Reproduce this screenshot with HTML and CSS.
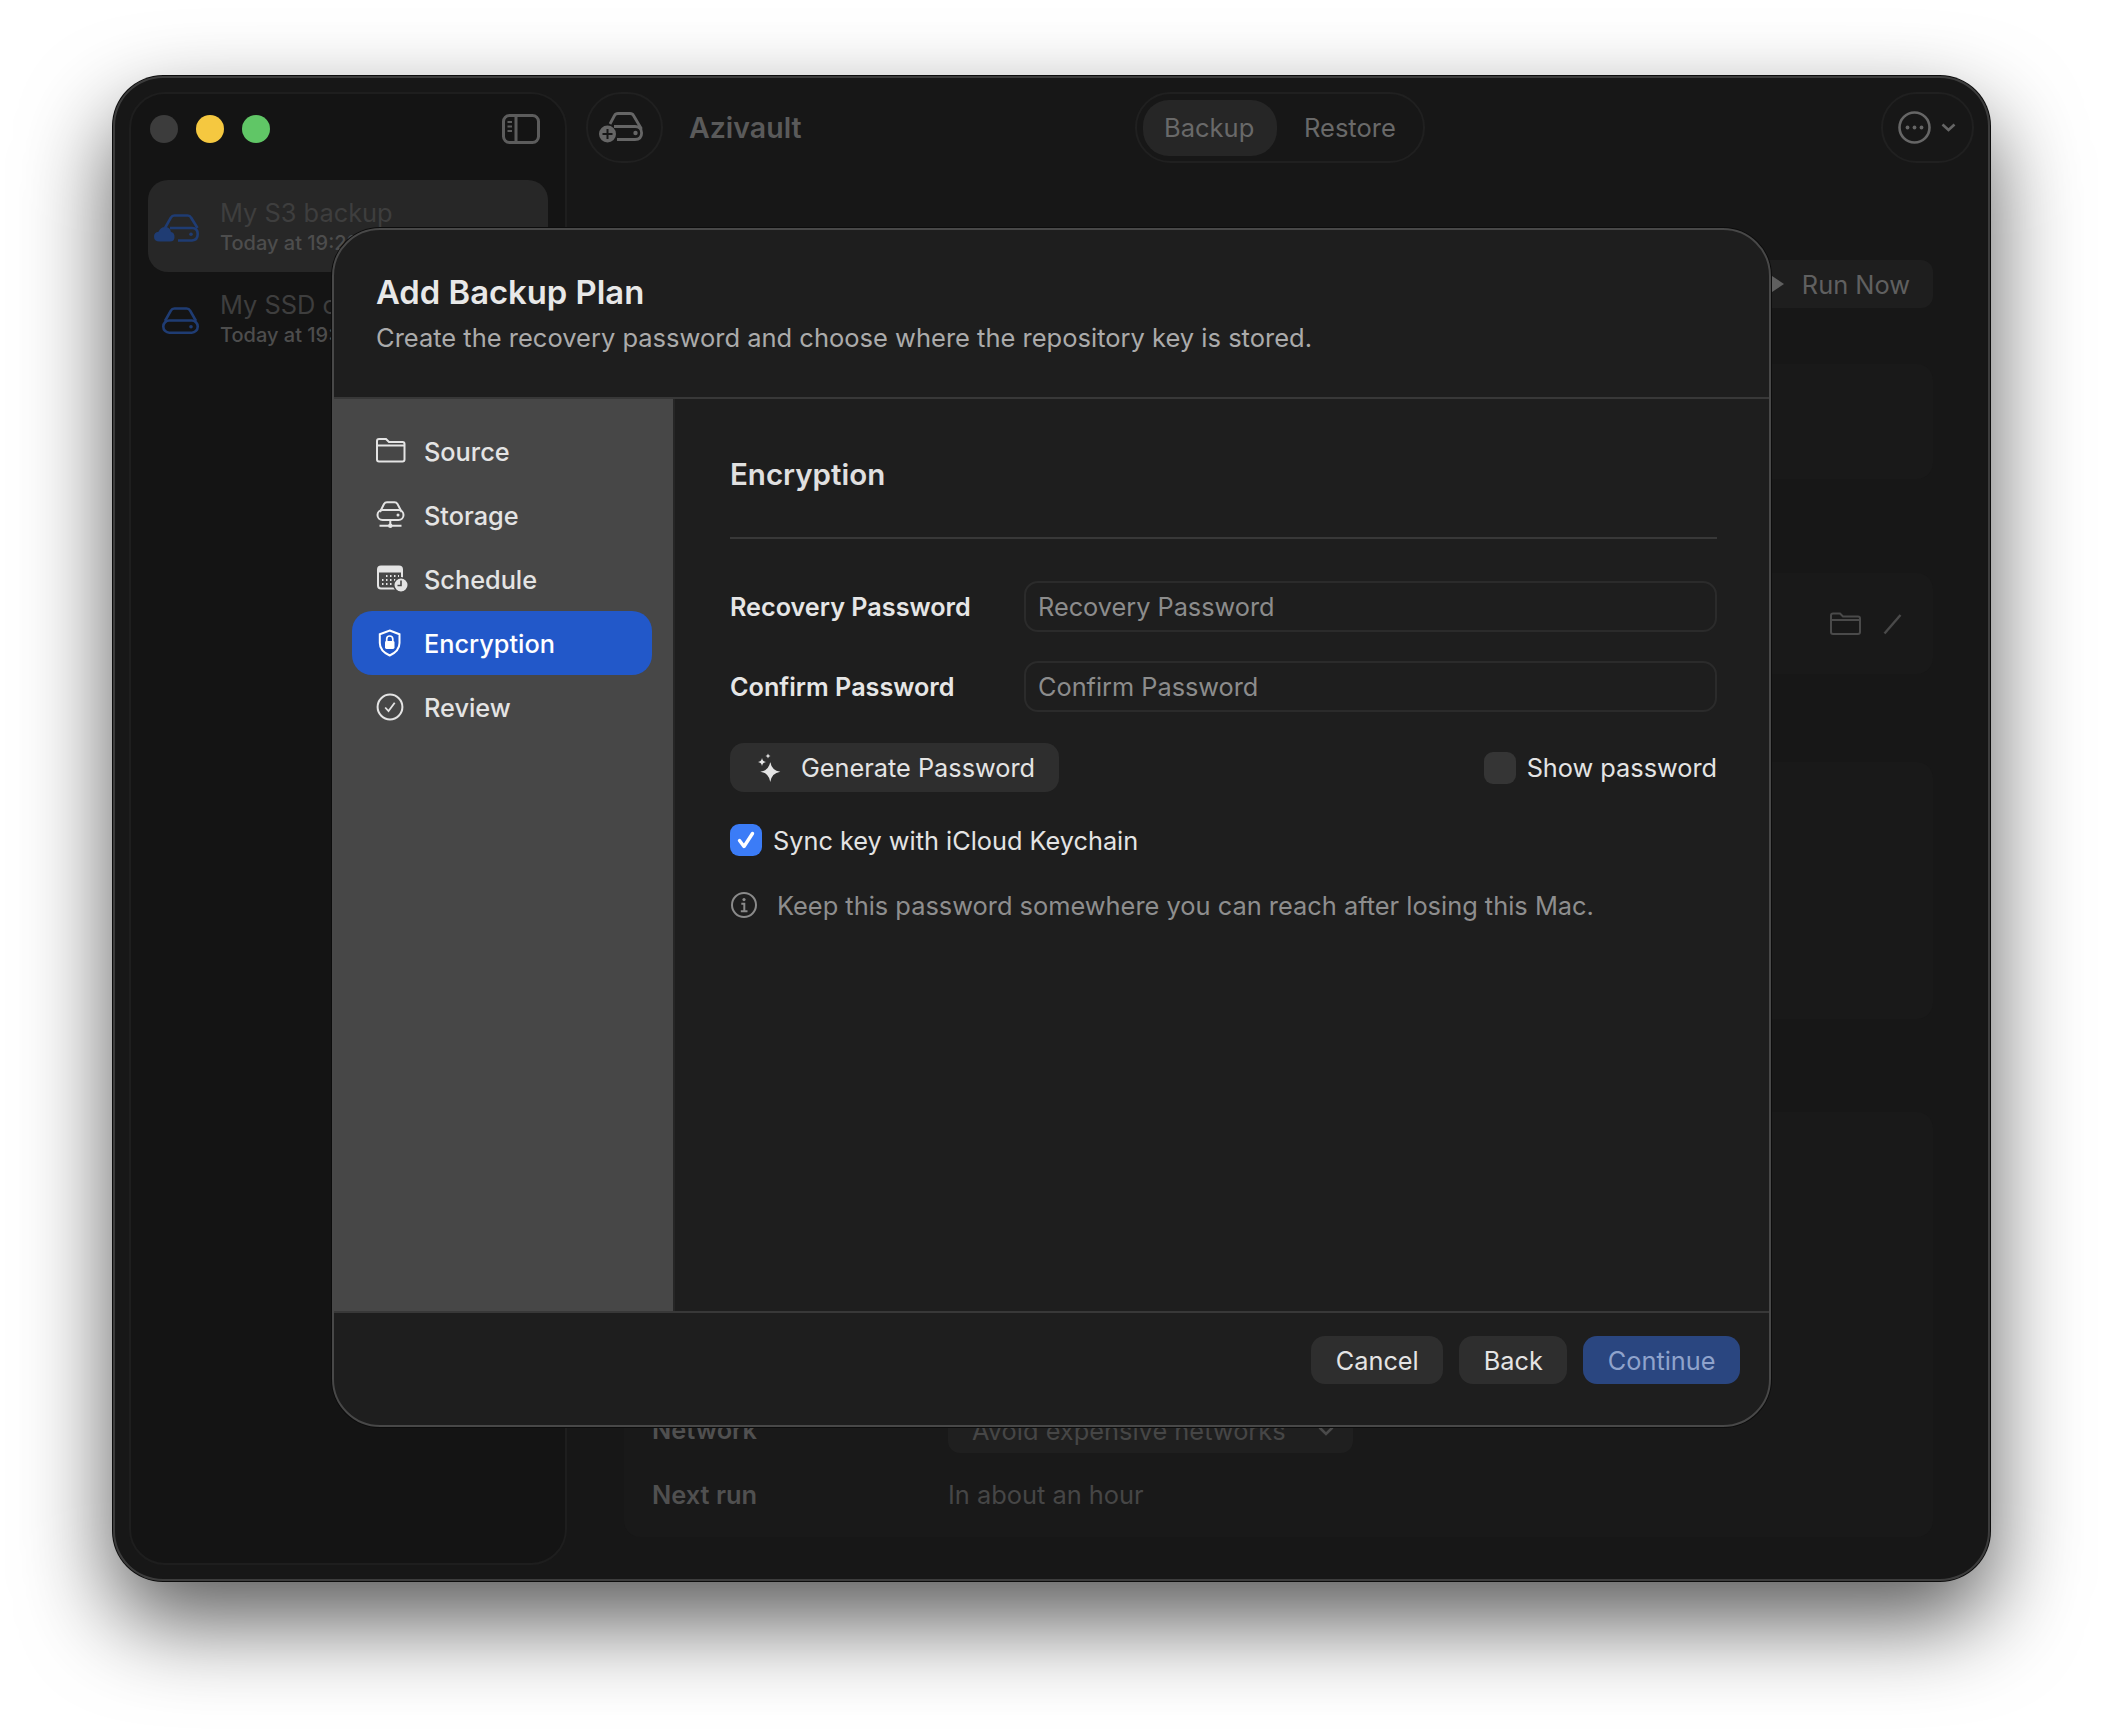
FILE: index.html
```html
<!DOCTYPE html>
<html lang="en">
<head>
    <meta charset="UTF-8">
    <title>Azivault</title>
    <link rel="stylesheet" href="styles.css">
</head>
<body>

<div class="window">

    <aside class="sidebar">
        <div class="sidebar-top">
            <span class="light light-close"></span>
            <span class="light light-min"></span>
            <span class="light light-max"></span>
            <svg class="toggle-icon" width="38" height="30" viewBox="0 0 38 30" fill="none" stroke="#5c5c5c" stroke-width="3">
                <rect x="1.5" y="1.5" width="35" height="27" rx="6"/>
                <path d="M14 1.5V28.5"/>
                <path d="M5.5 8H10M5.5 12.5H10M5.5 17H10" stroke-width="2"/>
            </svg>
        </div>

        <div class="plan plan-active">
            <span class="plan-icon">
                <svg width="45" height="28" viewBox="0 0 45 28" fill="none" stroke="#1f3c73" stroke-width="2.6">
                    <path d="M11 14L17 3.5Q18 1.5 20.5 1.5H33.5Q36 1.5 37 3.5L43.5 14"/>
                    <path d="M16 14H38Q43.7 14 43.7 20T38 26.5H24"/>
                    <circle cx="37" cy="20.3" r="1.8" fill="#1f3c73" stroke="none"/>
                    <path d="M5.5 27.5Q0 27.5 0 22.5Q0 18.5 4.5 17.7Q6.5 13 11 13Q16 13 17 18Q20.5 18.5 20.5 23Q20.5 27.5 16 27.5Z" fill="#1f3c73" stroke="none"/>
                </svg>
            </span>
            <div>
                <div class="plan-name">My S3 backup</div>
                <div class="plan-time">Today at 19:22</div>
            </div>
        </div>

        <div class="plan">
            <span class="plan-icon">
                <svg width="37" height="27" viewBox="0 0 37 27" fill="none" stroke="#1f3c73" stroke-width="2.6">
                    <path d="M3 14L9 3.5Q10 1.5 12.5 1.5H24.5Q27 1.5 28 3.5L34 14"/>
                    <rect x="1.3" y="13.5" width="34.4" height="12.2" rx="6"/>
                    <circle cx="29" cy="19.8" r="1.8" fill="#1f3c73" stroke="none"/>
                </svg>
            </span>
            <div>
                <div class="plan-name">My SSD copy</div>
                <div class="plan-time">Today at 19:05</div>
            </div>
        </div>
    </aside>

    <main class="main">
        <header class="toolbar">
            <div class="round-btn add-btn">
                <svg width="44" height="31" viewBox="0 0 44 31" fill="none" stroke="#666" stroke-width="2.8">
                    <path d="M11 12L15.5 3.5Q16.5 1.5 19 1.5H31Q33.5 1.5 34.5 3.5L42.5 17"/>
                    <path d="M15 14.5H36Q42.6 14.5 42.6 21T36 27.5H18"/>
                    <circle cx="36.5" cy="21" r="2.2" fill="#666" stroke="none"/>
                    <circle cx="8.5" cy="22" r="8.5" fill="#666" stroke="none"/>
                    <path d="M8.5 17V27M3.5 22H13.5" stroke="#171717" stroke-width="2"/>
                </svg>
            </div>
            <div class="app-title">Azivault</div>
            <nav class="segment">
                <span class="segment-item segment-on">Backup</span>
                <span class="segment-item">Restore</span>
            </nav>
            <div class="round-btn more-btn">
                <svg width="33" height="33" viewBox="0 0 33 33" fill="none" stroke="#666" stroke-width="2.6">
                    <circle cx="16.5" cy="16.5" r="15"/>
                    <circle cx="9.5" cy="16.5" r="1.9" fill="#666" stroke="none"/>
                    <circle cx="16.5" cy="16.5" r="1.9" fill="#666" stroke="none"/>
                    <circle cx="23.5" cy="16.5" r="1.9" fill="#666" stroke="none"/>
                </svg>
                <svg width="15" height="9" viewBox="0 0 15 9" fill="none" stroke="#666" stroke-width="2.6">
                    <path d="M1.5 1.5L7.5 7L13.5 1.5"/>
                </svg>
            </div>
        </header>

        <section class="content">
            <div class="run-now">
                <svg width="15" height="20" viewBox="0 0 15 20"><path d="M0 0L15 10L0 20Z" fill="#5f5f5f"/></svg>
                <span>Run Now</span>
            </div>

            <div class="card card-one"></div>

            <div class="card card-two">
                <svg width="31" height="23" viewBox="0 0 31 23" fill="none" stroke="#4a4a4a" stroke-width="2">
                    <path d="M3 1.5H10L13 4.5H28Q30 4.5 30 6.5V20Q30 22 28 22H3Q1 22 1 20V3.5Q1 1.5 3 1.5Z"/>
                    <path d="M1 8H30"/>
                </svg>
                <svg width="20" height="23" viewBox="0 0 20 23" fill="none" stroke="#4a4a4a" stroke-width="2.4">
                    <path d="M1.5 21.5L17.5 3"/>
                </svg>
            </div>

            <div class="card card-three"></div>

            <div class="card card-four">
                <div class="card-row">
                    <span class="card-label">Network</span>
                    <span class="card-select">
                        Avoid expensive networks
                        <svg width="16" height="10" viewBox="0 0 16 10" fill="none" stroke="#4a4a4a" stroke-width="2.6"><path d="M1.5 1.5L8 8L14.5 1.5"/></svg>
                    </span>
                </div>
                <div class="card-row next-run">
                    <span class="card-label">Next run</span>
                    <span class="card-value">In about an hour</span>
                </div>
            </div>
        </section>
    </main>

    <!-- sheet -->
    <div class="modal">
        <div class="modal-head">
            <h1>Add Backup Plan</h1>
            <p>Create the recovery password and choose where the repository key is stored.</p>
        </div>

        <div class="modal-body">
            <ul class="steps">
                <li class="step">
                    <svg width="32" height="32" viewBox="0 0 32 32" fill="none" stroke="#e4e4e4" stroke-width="2">
                        <path d="M3 4H10L13 7H26.5Q28.5 7 28.5 9V24.5Q28.5 26.5 26.5 26.5H3Q1 26.5 1 24.5V6Q1 4 3 4Z"/>
                        <path d="M1 10.5H28.5"/>
                    </svg>
                    Source
                </li>
                <li class="step">
                    <svg width="32" height="32" viewBox="0 0 32 32" fill="none" stroke="#e4e4e4" stroke-width="2">
                        <path d="M4 13L8 5Q9 3.3 11 3.3H18.5Q20.5 3.3 21.5 5L25.7 13"/>
                        <rect x="1.5" y="11" width="26" height="10" rx="5"/>
                        <circle cx="22" cy="16" r="1.5" fill="#e4e4e4" stroke="none"/>
                        <path d="M14.3 21V27M3.5 26.8H25.5"/>
                        <circle cx="14.3" cy="26.8" r="2.2" fill="#e4e4e4" stroke="none"/>
                    </svg>
                    Storage
                </li>
                <li class="step">
                    <svg width="32" height="32" viewBox="0 0 32 32" fill="none" stroke="#e4e4e4" stroke-width="2">
                        <rect x="2" y="3.5" width="24" height="22" rx="3"/>
                        <path d="M5 3.5H23Q26 3.5 26 6.5V9.5H2V6.5Q2 3.5 5 3.5Z" fill="#e4e4e4" stroke="none"/>
                        <path d="M10 13H11.5M14 13H15.5M18 13H19.5M22 13H23M6 17H7.5M10 17H11.5M14 17H15.5M18 17H19.5M6 21H7.5M10 21H11.5M14 21H15.5" stroke-width="1.8"/>
                        <circle cx="25" cy="22" r="7.2" fill="#e4e4e4" stroke="#474747" stroke-width="1.4"/>
                        <path d="M25 17.5V22.5H21.5" stroke="#474747" stroke-width="1.6"/>
                    </svg>
                    Schedule
                </li>
                <li class="step step-active">
                    <svg width="32" height="32" viewBox="0 0 32 32" fill="none" stroke="#fff" stroke-width="2">
                        <path d="M13.7 3.5L23.5 7.3V16Q23.5 24 13.7 28.5Q3.8 24 3.8 16V7.3Z"/>
                        <rect x="9" y="14" width="9.5" height="8" rx="1.4" fill="#fff" stroke="none"/>
                        <path d="M10.7 14.5V12Q10.7 9 13.7 9T16.8 12V14.5" stroke-width="1.7"/>
                    </svg>
                    Encryption
                </li>
                <li class="step">
                    <svg width="32" height="32" viewBox="0 0 32 32" fill="none" stroke="#e4e4e4" stroke-width="2">
                        <circle cx="14" cy="16" r="12.4"/>
                        <path d="M9.2 16.5L12.5 20L18.7 11.8" stroke-width="1.8"/>
                    </svg>
                    Review
                </li>
            </ul>

            <div class="pane">
                <h2>Encryption</h2>
                <div class="pane-rule"></div>

                <div class="form-row">
                    <label for="recovery">Recovery Password</label>
                    <input type="password" id="recovery" placeholder="Recovery Password">
                </div>
                <div class="form-row">
                    <label for="confirm">Confirm Password</label>
                    <input type="password" id="confirm" placeholder="Confirm Password">
                </div>

                <div class="action-row">
                    <button class="btn btn-generate">
                        <svg width="24" height="30" viewBox="0 0 24 30" fill="#e4e4e4">
                            <path d="M13.3 8.7Q14.5 17.5 23.3 18.7Q14.5 20 13.3 29Q12 20 3.3 18.7Q12 17.5 13.3 8.7Z"/>
                            <path d="M5 5Q5.5 8.5 9 9Q5.5 9.5 5 13Q4.5 9.5 1 9Q4.5 8.5 5 5Z"/>
                            <path d="M11 0.5Q11.3 2.7 13.5 3Q11.3 3.3 11 5.5Q10.7 3.3 8.5 3Q10.7 2.7 11 0.5Z"/>
                        </svg>
                        Generate Password
                    </button>
                    <label class="check">
                        <span class="box"></span>
                        Show password
                    </label>
                </div>

                <label class="check sync-row">
                    <span class="box box-on">
                        <svg width="24" height="24" viewBox="0 0 24 24" fill="none" stroke="#fff" stroke-width="3.4" stroke-linecap="round" stroke-linejoin="round">
                            <path d="M5.5 12.5L10 18.5L18.5 5.5"/>
                        </svg>
                    </span>
                    Sync key with iCloud Keychain
                </label>

                <div class="note">
                    <svg width="28" height="28" viewBox="0 0 28 28" fill="none" stroke="#8a8a8a" stroke-width="2">
                        <circle cx="14" cy="14" r="12"/>
                        <circle cx="14" cy="8.6" r="1.6" fill="#8a8a8a" stroke="none"/>
                        <path d="M11.3 12.7H14.3V20M10.8 20.3H17.5"/>
                    </svg>
                    Keep this password somewhere you can reach after losing this Mac.
                </div>
            </div>
        </div>

        <div class="modal-foot">
            <button class="btn btn-foot">Cancel</button>
            <button class="btn btn-foot">Back</button>
            <button class="btn btn-foot btn-primary">Continue</button>
        </div>
    </div>

</div>

</body>
</html>
```

FILE: styles.css
```css
* {
    box-sizing: border-box;
}

html, body {
    margin: 0;
    height: 100%;
}

body {
    background-color: #fff;
    font-family: Inter, "Liberation Sans", sans-serif;
    padding: 76px 0 0 113px;
    overflow: hidden;
}

.window {
    position: relative;
    display: flex;
    width: 1877px;
    height: 1505px;
    padding: 16px;
    background-color: #171717;
    border-radius: 50px;
    box-shadow: inset 0 0 0 2px #3c3c3c, 0 0 0 1px #0c0c0c, 0 40px 90px rgba(0, 0, 0, .65);
}

/* sidebar */
.sidebar {
    flex: none;
    width: 438px;
    background-color: #141414;
    border: 2px solid #1e1e1e;
    border-radius: 36px;
}

.sidebar-top {
    display: flex;
    align-items: center;
    gap: 18px;
    height: 70px;
    padding: 0 25px 0 19px;
    margin-bottom: 16px;
}

.light {
    width: 28px;
    height: 28px;
    border-radius: 50%;
}

.light-close { background-color: #3c3c3c; }
.light-min { background-color: #f5c840; }
.light-max { background-color: #60c666; }

.toggle-icon {
    margin-left: auto;
}

.plan {
    display: flex;
    height: 92px;
    margin: 0 17px;
    padding: 17px 0 0 6px;
    border-radius: 20px;
    gap: 21px;
}

.plan-active {
    background-color: #272727;
}

.plan-icon {
    display: flex;
    justify-content: flex-end;
    align-items: center;
    width: 45px;
    height: 60px;
    padding-top: 2px;
}

.plan-name {
    font-size: 25.4px;
    line-height: 32px;
    color: #3e3e3e;
    white-space: nowrap;
}

.plan-time {
    font-size: 20px;
    font-weight: 500;
    line-height: 28px;
    color: #4d4d4d;
    white-space: nowrap;
}

/* main area */
.main {
    flex: 1;
    display: flex;
    flex-direction: column;
}

.toolbar {
    display: flex;
    align-items: center;
    height: 71px;
    padding-left: 19px;
}

.round-btn {
    display: flex;
    align-items: center;
    height: 71px;
    border: 2px solid #202020;
    border-radius: 36px;
}

.add-btn {
    width: 77px;
    justify-content: center;
    padding-right: 7px;
}

.more-btn {
    width: 93px;
    margin-left: auto;
    padding-left: 15px;
    gap: 10px;
}

.app-title {
    width: 472px;
    padding-left: 26px;
    font-size: 28.5px;
    font-weight: 600;
    color: #5a5a5a;
}

.segment {
    display: flex;
    align-items: center;
    width: 290px;
    height: 71px;
    padding: 0 6px;
    border: 2px solid #202020;
    border-radius: 36px;
}

.segment-item {
    font-size: 25.5px;
    line-height: 56px;
    padding: 0 20px;
    color: #696969;
}

.segment-on {
    width: 134px;
    padding: 0 21px;
    margin-right: 7px;
    background-color: #262626;
    border-radius: 26px;
}

.content {
    display: flex;
    flex-direction: column;
    padding: 0 41px 0 57px;
}

.run-now {
    display: flex;
    align-items: center;
    gap: 18px;
    align-self: flex-end;
    height: 48px;
    margin-top: 97px;
    padding: 0 23px 0 24px;
    background-color: #1e1e1e;
    border-radius: 12px;
    font-size: 25.4px;
    color: #606060;
}

.card {
    background-color: #191919;
    border-radius: 16px;
}

.card-one {
    height: 115px;
    margin-top: 56px;
}

.card-two {
    display: flex;
    justify-content: flex-end;
    align-items: center;
    gap: 22px;
    height: 101px;
    margin-top: 94px;
    padding-right: 30px;
}

.card-three {
    height: 257px;
    margin-top: 88px;
}

.card-four {
    display: flex;
    flex-direction: column;
    justify-content: flex-end;
    height: 425px;
    margin-top: 93px;
    padding: 0 0 28px 28px;
}

.card-row {
    display: flex;
    align-items: center;
    font-size: 25.4px;
}

.next-run {
    height: 30px;
    margin-top: 26px;
}

.card-label {
    width: 296px;
    font-weight: 600;
    color: #505050;
}

.card-value {
    color: #464646;
}

.card-select {
    display: flex;
    justify-content: space-between;
    align-items: center;
    width: 405px;
    height: 48px;
    padding: 3px 19px 0 24px;
    background-color: #1f1f1f;
    border-radius: 12px;
    color: #464646;
}

/* modal sheet */
.modal {
    position: absolute;
    left: 219px;
    top: 152px;
    display: flex;
    flex-direction: column;
    width: 1439px;
    height: 1199px;
    background-color: #1e1e1e;
    border: 2px solid #484848;
    border-radius: 48px;
    box-shadow: 0 0 0 1px #0c0c0c;
    overflow: hidden;
}

.modal-head {
    flex: none;
    height: 169px;
    padding: 42px 0 0 42px;
    border-bottom: 2px solid #383838;
}

.modal-head h1 {
    margin: 0;
    font-size: 32.8px;
    font-weight: 600;
    line-height: 40px;
    color: #e8e8e8;
}

.modal-head p {
    margin: 10px 0 0;
    font-size: 25.5px;
    line-height: 32px;
    color: #ababab;
}

.modal-body {
    flex: 1;
    display: flex;
}

.steps {
    flex: none;
    width: 341px;
    margin: 0;
    padding: 20px 0 0 18px;
    list-style: none;
    background-color: #474747;
    border-right: 2px solid #262626;
}

.step {
    display: flex;
    align-items: center;
    gap: 16px;
    width: 300px;
    height: 64px;
    padding-left: 24px;
    border-radius: 20px;
    font-size: 25.3px;
    font-weight: 500;
    color: #e4e4e4;
}

.step-active {
    background-color: #2258c9;
    color: #fff;
}

.pane {
    flex: 1;
    padding: 56px 52px 0 55px;
}

.pane h2 {
    margin: 0 0 44px;
    font-size: 29.5px;
    font-weight: 600;
    line-height: 38px;
    color: #e0e0e0;
}

.pane-rule {
    height: 2px;
    background-color: #383838;
}

.form-row {
    display: flex;
    align-items: center;
    height: 51px;
    margin-top: 29px;
}

.pane-rule + .form-row {
    margin-top: 42px;
}

.form-row label {
    flex: none;
    width: 294px;
    font-size: 25.2px;
    font-weight: 600;
    color: #e6e6e6;
}

.form-row input {
    flex: 1;
    height: 51px;
    padding: 0 12px;
    background: transparent;
    border: 2px solid #2b2b2b;
    border-radius: 14px;
    font-family: inherit;
    font-size: 25.3px;
    color: #e6e6e6;
    outline: none;
}

.form-row input::placeholder {
    color: #8c8c8c;
    opacity: 1;
}

.btn {
    border: none;
    border-radius: 14px;
    background-color: #2e2e2e;
    font-family: inherit;
    font-size: 25.3px;
    color: #e4e4e4;
}

.action-row {
    display: flex;
    justify-content: space-between;
    align-items: center;
    margin-top: 31px;
}

.btn-generate {
    display: flex;
    align-items: center;
    gap: 20px;
    width: 329px;
    height: 49px;
    padding: 0 0 0 27px;
}

.check {
    display: flex;
    align-items: center;
    gap: 11px;
    font-size: 25.3px;
    color: #e4e4e4;
}

.box {
    display: flex;
    justify-content: center;
    align-items: center;
    width: 32px;
    height: 32px;
    background-color: #353535;
    border-radius: 9px;
}

.box-on {
    background-color: #3b7cf7;
}

.sync-row {
    margin-top: 32px;
}

.note {
    display: flex;
    align-items: center;
    gap: 19px;
    height: 30px;
    margin-top: 34px;
    font-size: 25.4px;
    color: #8e8e8e;
}

.modal-foot {
    flex: none;
    display: flex;
    justify-content: flex-end;
    gap: 16px;
    height: 114px;
    padding: 23px 29px 0 0;
    border-top: 2px solid #383838;
}

.btn-foot {
    height: 48px;
    padding: 0 24.5px;
}

.btn-primary {
    background-color: #2a4680;
    color: #8fa3cc;
}
```
